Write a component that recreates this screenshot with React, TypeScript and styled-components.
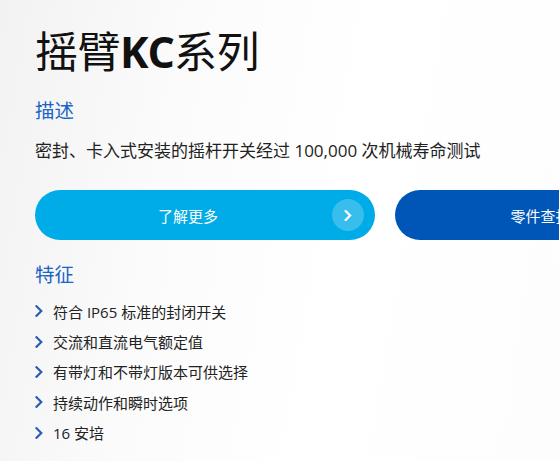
import React from "react";
import styled, { createGlobalStyle } from "styled-components";

const GlobalStyle = createGlobalStyle`
  html, body { margin: 0; padding: 0; }
  body {
    width: 559px;
    height: 461px;
    overflow: hidden;
    font-family: "Open Sans", "Noto Sans CJK SC", sans-serif;
  }
`;

const Page = styled.div`
  box-sizing: border-box;
  width: 559px;
  height: 461px;
  overflow: hidden;
  padding: 22px 0 0 35px;
  background: linear-gradient(100deg, #f2f2f2 0%, #fbfbfb 30%, #ffffff 60%, #fdfdfd 100%);
  display: flex;
  flex-direction: column;
`;

const Title = styled.h1`
  margin: 0;
  font-family: "Open Sans", "Noto Sans CJK SC", sans-serif;
  font-size: 43px;
  line-height: 60px;
  font-weight: 400;
  color: #111;
  white-space: nowrap;
  letter-spacing: -0.5px;
`;

const Bold = styled.span`
  font-weight: 700;
  letter-spacing: -1px;
`;

const SectionHeading = styled.h2<{ $top: number }>`
  margin: ${(p) => p.$top}px 0 0;
  font-family: "Noto Sans CJK SC", sans-serif;
  font-size: 19.5px;
  line-height: 28px;
  font-weight: 400;
  color: #1b63c4;
`;

const Description = styled.p`
  margin: 14px 0 0;
  font-family: "Open Sans", "Noto Sans CJK SC", sans-serif;
  font-size: 17px;
  line-height: 26px;
  color: #222;
  white-space: nowrap;
`;

const ButtonRow = styled.div`
  display: flex;
  gap: 20px;
  margin-top: 26px;
  width: 700px;
`;

const PillButton = styled.a<{ $bg: string }>`
  position: relative;
  box-sizing: border-box;
  flex: 0 0 340px;
  height: 50px;
  padding-right: 34px;
  border-radius: 25px;
  background: ${(p) => p.$bg};
  color: #fff;
  display: flex;
  align-items: center;
  justify-content: center;
  font-family: "Noto Sans CJK SC", sans-serif;
  font-size: 15px;
  text-decoration: none;
  white-space: nowrap;
`;

const ArrowCircle = styled.span`
  position: absolute;
  right: 11px;
  top: 50%;
  margin-top: -16px;
  width: 32px;
  height: 32px;
  border-radius: 50%;
  background: rgba(255, 255, 255, 0.22);
  display: flex;
  align-items: center;
  justify-content: center;
`;

const FeatureList = styled.ul`
  list-style: none;
  margin: 8px 0 0;
  padding: 0;
  display: flex;
  flex-direction: column;
`;

const FeatureItem = styled.li`
  display: flex;
  align-items: center;
  gap: 10px;
  height: 30.4px;
  font-family: "Open Sans", "Noto Sans CJK SC", sans-serif;
  font-size: 15px;
  color: #222;
  white-space: nowrap;
`;

const Chevron = ({ color, w, h, sw }: { color: string; w: number; h: number; sw: number }) => (
  <svg width={w} height={h} viewBox="0 0 8 12" fill="none">
    <path d="M1.5 1.2 L6.3 6 L1.5 10.8" stroke={color} strokeWidth={sw} strokeLinecap="square" strokeLinejoin="miter" />
  </svg>
);

const features = [
  "符合 IP65 标准的封闭开关",
  "交流和直流电气额定值",
  "有带灯和不带灯版本可供选择",
  "持续动作和瞬时选项",
  "16 安培",
];

export default function App() {
  return (
    <>
      <GlobalStyle />
      <Page>
        <Title>
          摇臂<Bold>KC</Bold>系列
        </Title>
        <SectionHeading $top={14}>描述</SectionHeading>
        <Description>密封、卡入式安装的摇杆开关经过 100,000 次机械寿命测试</Description>
        <ButtonRow>
          <PillButton $bg="#00ace7" href="#">
            了解更多
            <ArrowCircle>
              <Chevron color="#fff" w={8} h={11} sw={2.4} />
            </ArrowCircle>
          </PillButton>
          <PillButton $bg="#0056b6" href="#">
            零件查找器
          </PillButton>
        </ButtonRow>
        <SectionHeading $top={20}>特征</SectionHeading>
        <FeatureList>
          {features.map((f) => (
            <FeatureItem key={f}>
              <Chevron color="#2a5cb6" w={8} h={12} sw={2.2} />
              {f}
            </FeatureItem>
          ))}
        </FeatureList>
      </Page>
    </>
  );
}
